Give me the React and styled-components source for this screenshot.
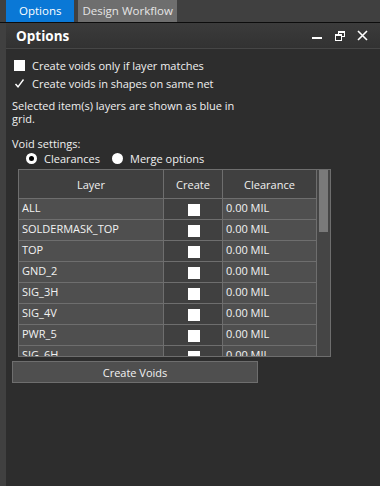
import styled, { createGlobalStyle } from "styled-components";

const layers = ["ALL", "SOLDERMASK_TOP", "TOP", "GND_2", "SIG_3H", "SIG_4V", "PWR_5", "SIG_6H"];

const GlobalStyle = createGlobalStyle`
    html, body {
        margin: 0;
        padding: 0;
        background: #2d2d2d;
    }
    body {
        font-family: "Open Sans", "Noto Sans", sans-serif;
        color: #f0f0f0;
    }
`

const App = () => {
    return (
        <Page>
            <GlobalStyle />
            <TabBar>
                <Tab active>Options</Tab>
                <Tab>Design Workflow</Tab>
            </TabBar>
            <Body>
                <LeftStrip />
                <Panel>
                    <Header>
                        <Title>Options</Title>
                        <Controls>
                            <svg width="12" height="12" viewBox="0 0 12 12">
                                <rect x="1" y="7" width="10" height="2" fill="#fff" />
                            </svg>
                            <svg width="10" height="10" viewBox="0 0 10 10">
                                <rect x="3.5" y="0.5" width="6" height="5" fill="none" stroke="#fff" />
                                <rect x="3.5" y="0.5" width="6" height="1.5" fill="#fff" />
                                <rect x="0.5" y="3.5" width="6" height="6" fill="#2f2f2f" stroke="#fff" />
                                <rect x="0.5" y="3.5" width="6" height="1.5" fill="#fff" />
                            </svg>
                            <svg width="11" height="11" viewBox="0 0 11 11">
                                <path d="M1 1 L10 10 M10 1 L1 10" stroke="#fff" strokeWidth="1.6" />
                            </svg>
                        </Controls>
                    </Header>
                    <Content>
                        <CheckRow>
                            <Box />
                            <span>Create voids only if layer matches</span>
                        </CheckRow>
                        <CheckRow>
                            <Box checked>
                                <svg width="11" height="11" viewBox="0 0 11 11">
                                    <path d="M1.5 6 L4 8.8 L9.5 1.5" fill="none" stroke="#fff" strokeWidth="1.4" />
                                </svg>
                            </Box>
                            <span>Create voids in shapes on same net</span>
                        </CheckRow>
                        <Note>Selected item(s) layers are shown as blue in grid.</Note>
                        <Label>Void settings:</Label>
                        <RadioRow>
                            <Radio selected />
                            <RadioText>Clearances</RadioText>
                            <Radio />
                            <RadioText>Merge options</RadioText>
                        </RadioRow>
                        <Grid>
                            <GridBody>
                                <Cells>
                                    <HeadCell>Layer</HeadCell>
                                    <HeadCell>Create</HeadCell>
                                    <HeadCell>Clearance</HeadCell>
                                    {layers.map((name) => (
                                        <Row key={name}>
                                            <Cell>{name}</Cell>
                                            <Cell dark center>
                                                <CellBox />
                                            </Cell>
                                            <Cell>0.00 MIL</Cell>
                                        </Row>
                                    ))}
                                </Cells>
                            </GridBody>
                            <ScrollTrack>
                                <Thumb />
                            </ScrollTrack>
                        </Grid>
                        <Button>Create Voids</Button>
                    </Content>
                </Panel>
            </Body>
        </Page>
    )
}

const Page = styled.div`
    width: 380px;
    height: 486px;
    display: flex;
    flex-direction: column;
    overflow: hidden;
`

const TabBar = styled.div`
    height: 22px;
    background: #404040;
    border-bottom: 1px solid #0c0c0c;
    display: flex;
    padding-left: 6px;
    gap: 4px;
`

const Tab = styled.div`
    height: 22px;
    font-size: 11.5px;
    line-height: 22px;
    color: ${(p) => (p.active ? "#ffffff" : "#e6e6e6")};
    background: ${(p) => (p.active ? "#0a78d6" : "#6e6e6e")};
    padding: ${(p) => (p.active ? "0 13px" : "0 4px")};
`

const Body = styled.div`
    flex: 1;
    display: flex;
`

const LeftStrip = styled.div`
    width: 6px;
    background: #404040;
`

const Panel = styled.div`
    flex: 1;
    display: flex;
    flex-direction: column;
    background: #2d2d2d;
`

const Header = styled.div`
    height: 25px;
    background: linear-gradient(#3b3b3b, #323232);
    border-bottom: 1px solid #464646;
    display: flex;
    align-items: center;
    padding: 0 12px 0 10px;
`

const Title = styled.div`
    flex: 1;
    font-size: 13.5px;
    font-weight: 700;
    color: #ffffff;
`

const Controls = styled.div`
    display: flex;
    align-items: center;
    gap: 12px;
`

const Content = styled.div`
    display: flex;
    flex-direction: column;
    padding: 7px 6px 0;
    font-size: 11px;
`

const CheckRow = styled.div`
    display: flex;
    align-items: center;
    height: 18px;
    padding-left: 2px;
    gap: 7px;
`

const Box = styled.div`
    width: 11px;
    height: 11px;
    background: ${(p) => (p.checked ? "transparent" : "#ffffff")};
    display: flex;
    align-items: center;
    justify-content: center;
`

const Note = styled.div`
    margin-top: 7px;
    width: 240px;
    line-height: 13px;
`

const Label = styled.div`
    margin-top: 12px;
    line-height: 13px;
`

const RadioRow = styled.div`
    display: flex;
    align-items: center;
    height: 16px;
    padding-left: 14px;
`

const Radio = styled.div`
    width: 11px;
    height: 11px;
    border-radius: 50%;
    box-sizing: border-box;
    border: ${(p) => (p.selected ? "3px solid #ffffff" : "none")};
    background: ${(p) => (p.selected ? "#000" : "#fff")};
`

const RadioText = styled.span`
    margin: 0 12px 0 7px;
`

const Grid = styled.div`
    margin: 3px 0 0 6px;
    width: 311px;
    height: 186px;
    border: 1px solid #6e6e6e;
    display: flex;
    background: #474747;
`

const GridBody = styled.div`
    flex: 1;
    overflow: hidden;
`

const Cells = styled.div`
    display: grid;
    grid-template-columns: 145px 59px 94px;
`

const HeadCell = styled.div`
    height: 28px;
    background: #404040;
    border-right: 1px solid #6e6e6e;
    border-bottom: 1px solid #6e6e6e;
    display: flex;
    align-items: center;
    justify-content: center;
`

const Row = styled.div`
    display: contents;
`

const Cell = styled.div`
    background: ${(p) => (p.dark ? "#404040" : "#4f4f4f")};
    border-right: 1px solid #6e6e6e;
    border-bottom: 1px solid #6e6e6e;
    padding: ${(p) => (p.center ? "5px 0 0" : "1px 3px 0")};
    box-sizing: border-box;
    height: 21px;
    display: flex;
    justify-content: ${(p) => (p.center ? "center" : "flex-start")};
    align-items: flex-start;
    color: #f2f2f2;
`

const CellBox = styled.div`
    width: 12px;
    height: 12px;
    background: #ffffff;
    margin-left: 1px;
`

const ScrollTrack = styled.div`
    width: 13px;
    background: #454545;
    padding-left: 2px;
    box-sizing: border-box;
`

const Thumb = styled.div`
    width: 9px;
    height: 62px;
    background: #7a7a7a;
`

const Button = styled.div`
    margin-top: 4px;
    width: 246px;
    height: 22px;
    box-sizing: border-box;
    border: 1px solid #6e6e6e;
    background: #4f4f4f;
    display: flex;
    align-items: center;
    justify-content: center;
    color: #f2f2f2;
`

export default App;
